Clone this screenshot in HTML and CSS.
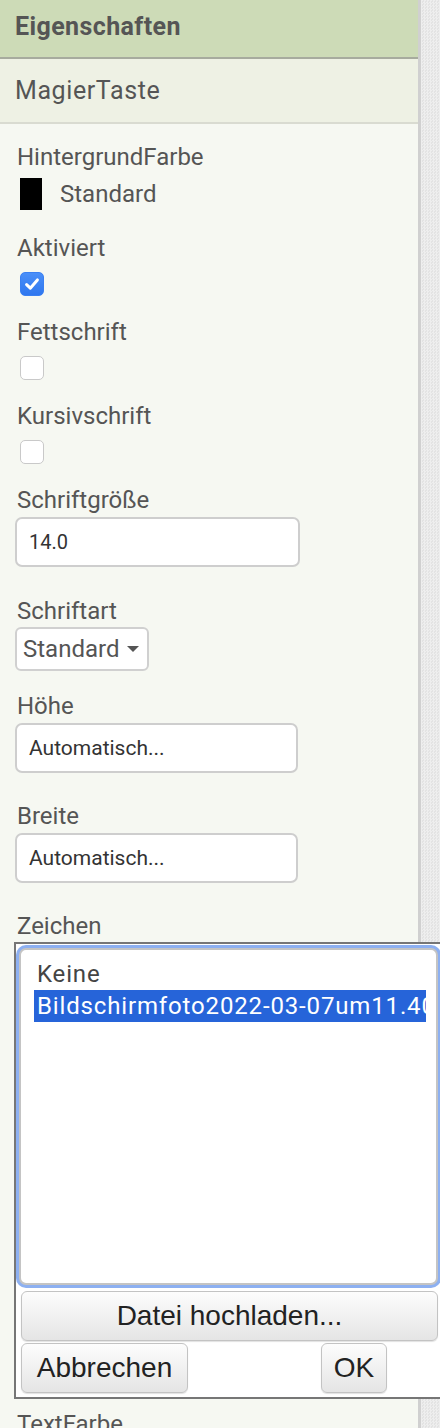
FILE: index.html
```html
<!DOCTYPE html>
<html lang="de">
<head>
<meta charset="utf-8">
<title>Eigenschaften</title>
<link rel="stylesheet" href="styles.css">
</head>
<body>
<div class="panel">
  <div class="head">Eigenschaften</div>
  <div class="subhead">MagierTaste</div>
  <div class="props">
    <div class="prop prop-color">
      <div class="label">HintergrundFarbe</div>
      <div class="color-row"><span class="swatch"></span><span class="color-name">Standard</span></div>
    </div>
    <div class="prop prop-check">
      <div class="label">Aktiviert</div>
      <span class="check checked"><svg viewBox="0 0 24 24" width="24" height="24"><path d="M6.6 12.6 L10.3 16.2 L17.4 7.9" fill="none" stroke="#fff" stroke-width="3" stroke-linecap="round" stroke-linejoin="round"/></svg></span>
    </div>
    <div class="prop prop-check">
      <div class="label">Fettschrift</div>
      <span class="check"></span>
    </div>
    <div class="prop prop-check">
      <div class="label">Kursivschrift</div>
      <span class="check"></span>
    </div>
    <div class="prop prop-input prop-size">
      <div class="label">Schriftgröße</div>
      <div class="input input-wide">14.0</div>
    </div>
    <div class="prop prop-select">
      <div class="label">Schriftart</div>
      <div class="select"><span>Standard</span><span class="caret"></span></div>
    </div>
    <div class="prop prop-input">
      <div class="label">Höhe</div>
      <div class="input">Automatisch...</div>
    </div>
    <div class="prop prop-input">
      <div class="label">Breite</div>
      <div class="input">Automatisch...</div>
    </div>
    <div class="prop prop-popup">
      <div class="label">Zeichen</div>
      <div class="popup">
        <div class="listring">
          <div class="listbox">
            <div class="option">Keine</div>
            <div class="option selected">Bildschirmfoto2022-03-07um11.40.12.png</div>
          </div>
        </div>
        <button class="btn btn-upload">Datei hochladen...</button>
        <div class="btn-row">
          <button class="btn btn-cancel">Abbrechen</button>
          <button class="btn btn-ok">OK</button>
        </div>
      </div>
    </div>
    <div class="prop">
      <div class="label">TextFarbe</div>
    </div>
  </div>
</div>
</body>
</html>
```

FILE: styles.css
```css
html, body {
  margin: 0;
  padding: 0;
}

body {
  height: 1428px;
  overflow: hidden;
  background-color: #e9e9e9;
  background-image: repeating-conic-gradient(#eeeeee 0 25%, #e3e3e3 0 50%);
  background-size: 3px 3px;
  font-family: Roboto, "Liberation Sans", sans-serif;
  color: #555;
}

.panel {
  width: 418px;
  min-height: 1428px;
  background: #f6f8f2;
  border-right: 3px solid #d0d0d0;
}

.head {
  height: 44px;
  padding: 13px 0 0 15px;
  background: #cddbb7;
  border-bottom: 2px solid #a7ab9e;
  font-size: 25px;
  line-height: 28px;
  letter-spacing: 0.4px;
  font-weight: bold;
  color: #555;
}

.subhead {
  height: 45px;
  padding: 18px 0 0 15px;
  background: #eef1e4;
  border-bottom: 2px solid #d9dbd1;
  font-size: 25px;
  line-height: 28px;
  letter-spacing: 0.6px;
  color: #555;
}

.props {
  padding: 19px 0 0 15px;
}

.label {
  margin-left: 2px;
  font-size: 24px;
  line-height: 28px;
  color: #555;
  white-space: nowrap;
}

/* colour property */
.prop-color {
  margin-bottom: 24px;
}

.color-row {
  display: flex;
  align-items: center;
  height: 32px;
  margin-top: 7px;
}

.swatch {
  width: 22px;
  height: 32px;
  margin-left: 5px;
  background: #000;
}

.color-name {
  margin-left: 18px;
  font-size: 24px;
  line-height: 28px;
  color: #555;
}

/* checkboxes */
.prop-check {
  margin-bottom: 22px;
}

.check {
  display: block;
  box-sizing: border-box;
  width: 24px;
  height: 24px;
  margin: 10px 0 0 5px;
  border: 1px solid #c9c9c9;
  border-radius: 5px;
  background: #fff;
}

.check svg {
  display: block;
  margin: -1px;
}

.check.checked {
  border-color: #3a80f2;
  background: linear-gradient(#4a8ff8, #2f77ef);
}

/* text inputs */
.prop-input {
  margin-bottom: 29px;
}

.prop-size {
  margin-bottom: 30px;
}

.input {
  display: flex;
  align-items: center;
  box-sizing: border-box;
  width: 283px;
  height: 50px;
  margin-top: 3px;
  padding-left: 12px;
  border: 2px solid #cecece;
  border-radius: 7px;
  background: #fff;
  font-size: 21px;
  color: #333;
}

.input-wide {
  width: 285px;
  font-size: 20px;
}

/* select */
.prop-select {
  margin-bottom: 21px;
}

.select {
  display: flex;
  align-items: center;
  box-sizing: border-box;
  width: 134px;
  height: 44px;
  margin-top: 2px;
  padding: 0 0 0 6px;
  border: 2px solid #d0d0d0;
  border-radius: 6px;
  background: #fff;
  font-size: 24px;
  color: #555;
}

.caret {
  width: 0;
  height: 0;
  margin-left: 8px;
  border-left: 6px solid transparent;
  border-right: 6px solid transparent;
  border-top: 6px solid #555;
}

/* popup */
.prop-popup {
  margin-bottom: 11px;
}

.popup {
  box-sizing: border-box;
  width: 440px;
  margin: 2px 0 0 -1px;
  padding: 1px 0 4px 0;
  border: 2px solid #767676;
  background: #fff;
}

.listring {
  box-sizing: border-box;
  width: 425px;
  height: 343px;
  padding: 3px;
  border-radius: 10px;
  background: #8db0f1;
}

.listbox {
  box-sizing: border-box;
  height: 100%;
  padding: 8px 10px 0 13px;
  border: 2px solid #c4c4c4;
  border-radius: 7px;
  background: #fff;
  overflow: hidden;
}

.option {
  height: 32px;
  padding-left: 3px;
  font-size: 24px;
  line-height: 32px;
  letter-spacing: 0.85px;
  color: #444;
  white-space: nowrap;
  overflow: hidden;
}

.option.selected {
  background: #2664d9;
  color: #fff;
}

.btn {
  display: block;
  box-sizing: border-box;
  height: 50px;
  padding: 0;
  border: 1px solid #c3c3c3;
  border-radius: 6px;
  background: linear-gradient(#fdfdfd, #e5e5e5);
  box-shadow: 0 1px 1px rgba(0, 0, 0, 0.12);
  font-family: "Liberation Sans", Arial, sans-serif;
  font-size: 28px;
  color: #222;
}

.btn-upload {
  width: 417px;
  margin: 3px 0 0 5px;
}

.btn-row {
  display: flex;
  gap: 133px;
  margin: 2px 0 0 5px;
}

.btn-cancel {
  width: 167px;
}

.btn-ok {
  width: 66px;
}
```
